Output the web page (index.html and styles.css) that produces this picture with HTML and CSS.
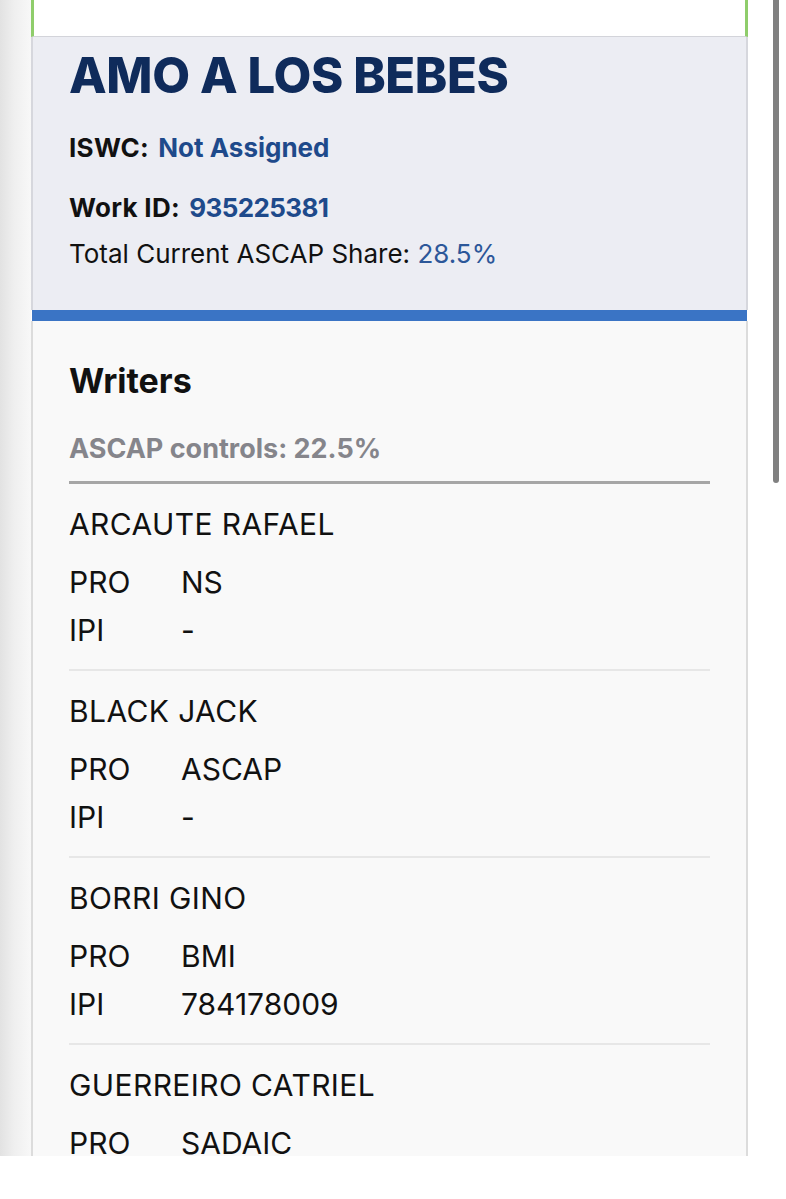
FILE: index.html
```html
<!DOCTYPE html>
<html lang="en">
<head>
<meta charset="utf-8">
<title>AMO A LOS BEBES</title>
<link rel="stylesheet" href="styles.css">
</head>
<body>
<div class="screen">
  <div class="gutter"></div>
  <main class="card">
    <div class="card-top"></div>
    <section class="work-head">
      <h1 class="work-title">AMO A LOS BEBES</h1>
      <p class="meta"><b>ISWC:</b> <span class="val">Not Assigned</span></p>
      <p class="meta meta-id"><b>Work ID:</b> <span class="val">935225381</span></p>
      <p class="share">Total Current ASCAP Share: <span class="share-val">28.5%</span></p>
    </section>
    <div class="accent"></div>
    <section class="writers">
      <h2 class="writers-title">Writers</h2>
      <div class="controls">ASCAP controls: 22.5%</div>
      <ul class="writer-list">
        <li class="writer">
          <div class="writer-name">ARCAUTE RAFAEL</div>
          <div class="rows">
            <div class="row"><span class="k">PRO</span><span class="v">NS</span></div>
            <div class="row"><span class="k">IPI</span><span class="v">-</span></div>
          </div>
        </li>
        <li class="writer">
          <div class="writer-name">BLACK JACK</div>
          <div class="rows">
            <div class="row"><span class="k">PRO</span><span class="v">ASCAP</span></div>
            <div class="row"><span class="k">IPI</span><span class="v">-</span></div>
          </div>
        </li>
        <li class="writer">
          <div class="writer-name">BORRI GINO</div>
          <div class="rows">
            <div class="row"><span class="k">PRO</span><span class="v">BMI</span></div>
            <div class="row"><span class="k">IPI</span><span class="v">784178009</span></div>
          </div>
        </li>
        <li class="writer">
          <div class="writer-name">GUERREIRO CATRIEL</div>
          <div class="rows">
            <div class="row"><span class="k">PRO</span><span class="v">SADAIC</span></div>
          </div>
        </li>
      </ul>
    </section>
  </main>
  <div class="rail"><div class="thumb"></div></div>
</div>
</body>
</html>
```

FILE: styles.css
```css
* { box-sizing: border-box; }
html, body { margin: 0; padding: 0; background: #ffffff; }
body { font-family: "Inter", "Lato", "Liberation Sans", sans-serif; color: #111111; }

.screen {
  display: flex;
  height: 1156px;
  overflow: hidden;
}

.gutter {
  width: 31px;
  flex: none;
  background: linear-gradient(to right, #e2e2e2 0%, #efefef 45%, #f8f8f8 100%);
}

.card {
  width: 717px;
  flex: none;
  display: flex;
  flex-direction: column;
}

.card-top {
  flex: none;
  height: 37px;
  background: #ffffff;
  border-left: 3px solid #8fcd6b;
  border-right: 3px solid #8fcd6b;
  border-bottom: 1px solid #d3d4da;
}

.work-head {
  flex: none;
  background: #ecedf3;
  border-left: 2px solid #d6d7dd;
  border-right: 2px solid #d6d7dd;
  padding: 10px 36px 0;
  height: 273px;
}

.work-title {
  margin: 0;
  font-size: 49px;
  line-height: 58px;
  font-weight: 800;
  color: #0f2b5b;
  letter-spacing: -0.4px;
}

.meta {
  margin: 26px 0 0;
  font-size: 26px;
  line-height: 34px;
  font-weight: 700;
  color: #111111;
}
.meta-id { margin-top: 26px; }
.meta b { font-weight: 700; letter-spacing: 0.3px; margin-right: 3px; }
.meta-id .val { letter-spacing: -0.6px; }
.val { color: #1e4a8b; }

.share {
  margin: 12px 0 0;
  font-size: 26px;
  line-height: 34px;
  font-weight: 400;
}
.share-val { color: #2c5799; }

.accent {
  flex: none;
  height: 11px;
  background: #3a74c5;
  margin: 0 1px;
}

.writers {
  flex: 1;
  background: #f9f9f9;
  border-left: 2px solid #dcdcdc;
  border-right: 2px solid #dcdcdc;
  padding: 40px 36px 0;
}

.writers-title {
  margin: 0;
  font-size: 34px;
  line-height: 40px;
  font-weight: 700;
}

.controls {
  margin-top: 32px;
  font-size: 27px;
  line-height: 32px;
  font-weight: 700;
  color: #85858b;
  padding-bottom: 16px;
  border-bottom: 3px solid #a6a6a6;
}

.writer-list {
  list-style: none;
  margin: 0;
  padding: 0;
}

.writer {
  padding: 22px 0 25px;
  border-bottom: 2px solid #e7e7e7;
}

.writer-name {
  font-size: 30px;
  line-height: 36px;
  margin-bottom: 26px;
  letter-spacing: 0.4px;
}

.rows {
  display: grid;
  row-gap: 20px;
}

.row {
  display: flex;
  font-size: 30px;
  line-height: 28px;
}
.k { width: 112px; flex: none; }

.rail {
  flex: 1;
  background: #ffffff;
}
.thumb {
  margin-left: 25px;
  width: 6px;
  height: 483px;
  background: #808080;
  border-radius: 0 0 3px 3px;
}
```
